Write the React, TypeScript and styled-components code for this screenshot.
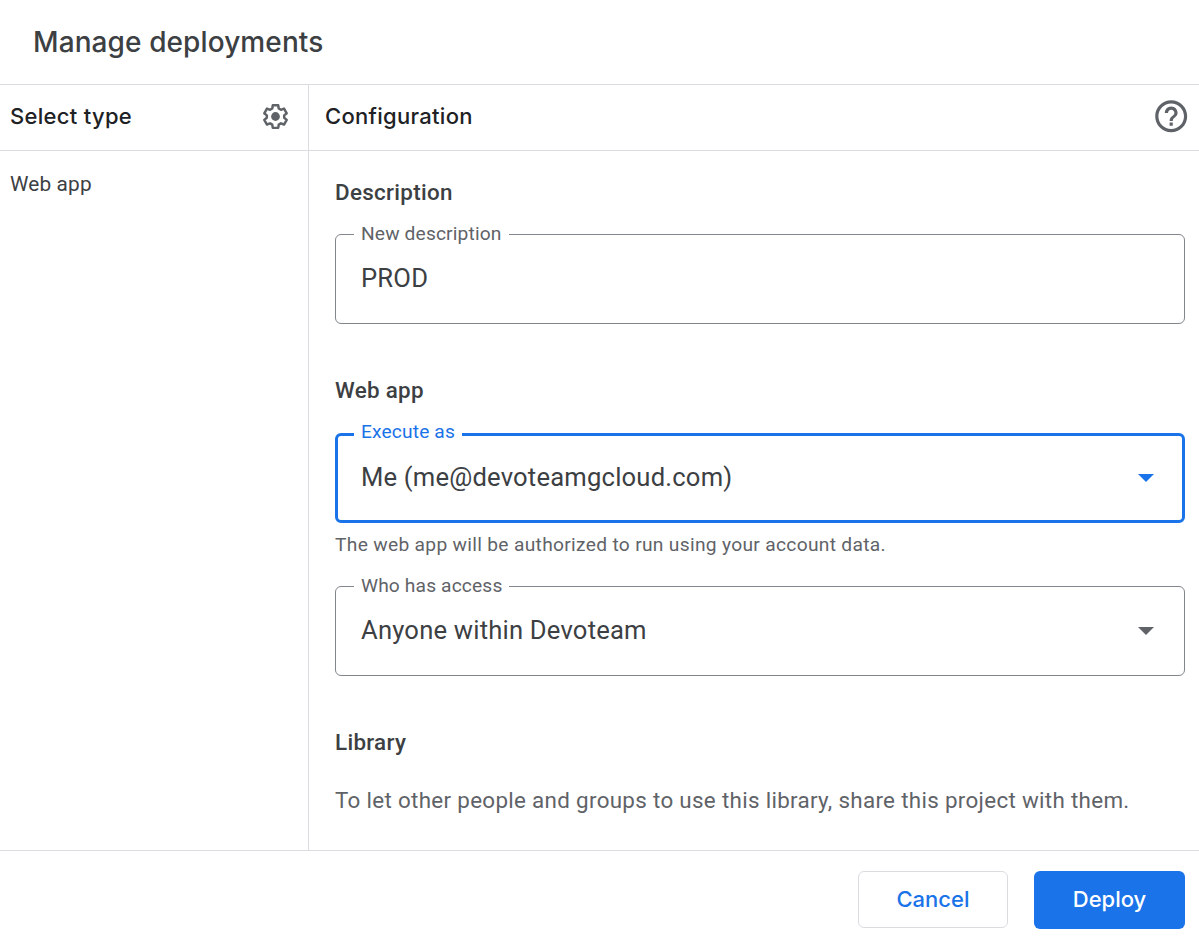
import React from "react";
import styled, { createGlobalStyle } from "styled-components";

const brand = 'Inter, "Liberation Sans", sans-serif';
const GlobalStyle = createGlobalStyle`
  * { box-sizing: border-box; }
  body { margin: 0; background: #fff; font-family: Roboto, "Liberation Sans", sans-serif; color: #3c4043; }
`;
const Dialog = styled.div`
  display: grid;
  grid-template-rows: 85px 1fr 90px;
  width: 100%;
  height: 940px;
  overflow: hidden;
`;
const TitleBar = styled.header`
  display: flex;
  align-items: center;
  padding: 0 33px;
  border-bottom: 1px solid #dadce0;
`;
const Title = styled.h1`
  margin: 0;
  font: 500 28px/40px ${brand};
  letter-spacing: 0.1px;
`;
const Main = styled.div`
  display: grid;
  grid-template-columns: 309px 1fr;
  min-height: 0;
`;
const Sidebar = styled.aside`
  border-right: 1px solid #dadce0;
`;
const PaneHeader = styled.div<{ $pad: string }>`
  display: flex;
  align-items: center;
  justify-content: space-between;
  height: 66px;
  padding: ${(p) => p.$pad};
  border-bottom: 1px solid #dadce0;
  svg { display: block; flex: none; }
`;
const PaneTitle = styled.h2`
  margin: 0;
  padding-bottom: 1px;
  color: #202124;
  font: 500 22px/32px ${brand};
  letter-spacing: 0.3px;
`;
const TypeItem = styled.div`
  padding: 17px 10px;
  font-size: 20.8px;
  line-height: 32px;
  letter-spacing: 0.15px;
`;
const Form = styled.div`
  padding: 25px 14px 0 26px;
`;
const SectionTitle = styled.h3<{ $top?: number }>`
  margin: ${(p) => p.$top ?? 0}px 0 0;
  font-size: 22.4px;
  font-weight: 500;
  line-height: 32px;
  letter-spacing: 0.3px;
`;
const Legend = styled.legend`
  height: 25px;
  padding: 0 7px;
  font-size: 19.2px;
  line-height: 23px;
  letter-spacing: 0.14px;
`;
const FieldRow = styled.div`
  display: flex;
  align-items: center;
  justify-content: space-between;
  height: 62px;
  padding-left: 7px;
`;
const Value = styled.span`
  color: #3c4043;
  font-size: 25.6px;
  line-height: 36px;
  letter-spacing: 0.2px;
`;
const Arrow = styled.svg`
  display: block;
  width: 16px;
  height: 8px;
  margin-top: 2px;
  fill: currentColor;
`;
const Field = styled.fieldset<{ $active?: boolean; $top: number }>`
  margin: ${(p) => p.$top}px 0 0;
  height: ${(p) => (p.$active ? 101 : 102)}px;
  min-width: 0;
  padding: 0 ${(p) => (p.$active ? "28px 0 16px" : "30px 0 18px")};
  border: ${(p) => (p.$active ? "3px solid #1a73e8" : "1px solid #80868b")};
  border-radius: 6px;
  color: ${(p) => (p.$active ? "#1a73e8" : "#5f6368")};
  ${Legend} { line-height: ${(p) => (p.$active ? 20 : 23)}px; }
  ${FieldRow} { height: ${(p) => (p.$active ? 60 : 62)}px; }
`;
const Helper = styled.p`
  margin: 9px 0 0;
  color: #5f6368;
  font-size: 19.2px;
  line-height: 26px;
  letter-spacing: 0.31px;
`;
const Note = styled.p`
  margin: 26px 0 0;
  color: #5f6368;
  font-size: 22.4px;
  line-height: 32px;
  letter-spacing: 0.31px;
`;
const Footer = styled.footer`
  display: flex;
  justify-content: flex-end;
  align-items: flex-start;
  gap: 26px;
  padding: 20px 14px 0;
  border-top: 1px solid #dadce0;
`;
const Button = styled.button<{ $primary?: boolean }>`
  width: ${(p) => (p.$primary ? 151 : 150)}px;
  height: ${(p) => (p.$primary ? 58 : 57)}px;
  padding: 0 0 2px;
  border: ${(p) => (p.$primary ? "0" : "1px solid #dadce0")};
  border-radius: 6px;
  background: ${(p) => (p.$primary ? "#1a73e8" : "#fff")};
  color: ${(p) => (p.$primary ? "#fff" : "#1a73e8")};
  font: 500 22px/32px ${brand};
  letter-spacing: 0;
`;

const GearIcon = () => (
  <svg width="31" height="31" viewBox="0 0 24 24" fill="none" stroke="#5f6368">
    <path
      strokeWidth="1.9"
      strokeLinejoin="round"
      d="M9.900 3.300h4.200l.4 2.500 1.700 1 2.400-.9 2.100 3.600-2 1.600v1.900l2 1.600-2.100 3.600-2.400-.9-1.700 1-.4 2.500H9.900l-.4-2.500-1.700-1-2.400.9-2.100-3.600 2-1.600v-1.900l-2-1.600 2.100-3.600 2.400.9 1.700-1z"
    />
    <circle cx="12" cy="12" r="3.400" fill="#5f6368" stroke="none" />
  </svg>
);
const HelpIcon = () => (
  <svg width="38.4" height="38.4" viewBox="0 0 24 24" fill="#5f6368">
    <path d="M11 18h2v-2h-2v2zm1-16C6.48 2 2 6.48 2 12s4.480 10 10 10 10-4.480 10-10S17.520 2 12 2zm0 18c-4.410 0-8-3.590-8-8s3.590-8 8-8 8 3.590 8 8-3.590 8-8 8zm0-14c-2.210 0-4 1.790-4 4h2c0-1.100.9-2 2-2s2 .9 2 2c0 2-3 1.750-3 5h2c0-2.250 3-2.500 3-5 0-2.210-1.790-4-4-4z" />
  </svg>
);
const DropdownArrow = () => (
  <Arrow viewBox="0 0 16 8">
    <path d="M0 0h16L8 8z" />
  </Arrow>
);

export default function App() {
  return (
    <>
      <GlobalStyle />
      <Dialog>
        <TitleBar>
          <Title>Manage deployments</Title>
        </TitleBar>
        <Main>
          <Sidebar>
            <PaneHeader $pad="0 17px 2px 10px">
              <PaneTitle>Select type</PaneTitle>
              <GearIcon />
            </PaneHeader>
            <TypeItem>Web app</TypeItem>
          </Sidebar>
          <section>
            <PaneHeader $pad="0 8.600px 2px 16px">
              <PaneTitle>Configuration</PaneTitle>
              <HelpIcon />
            </PaneHeader>
            <Form>
              <SectionTitle>Description</SectionTitle>
              <Field $top={14}>
                <Legend>New description</Legend>
                <FieldRow>
                  <Value>PROD</Value>
                </FieldRow>
              </Field>
              <SectionTitle $top={50}>Web app</SectionTitle>
              <Field $top={16} $active>
                <Legend>Execute as</Legend>
                <FieldRow>
                  <Value>Me (me@devoteamgcloud.com)</Value>
                  <DropdownArrow />
                </FieldRow>
              </Field>
              <Helper>The web app will be authorized to run using your account data.</Helper>
              <Field $top={16}>
                <Legend>Who has access</Legend>
                <FieldRow>
                  <Value>Anyone within Devoteam</Value>
                  <DropdownArrow />
                </FieldRow>
              </Field>
              <SectionTitle $top={50}>Library</SectionTitle>
              <Note>To let other people and groups to use this library, share this project with them.</Note>
            </Form>
          </section>
        </Main>
        <Footer>
          <Button>Cancel</Button>
          <Button $primary>Deploy</Button>
        </Footer>
      </Dialog>
    </>
  );
}
